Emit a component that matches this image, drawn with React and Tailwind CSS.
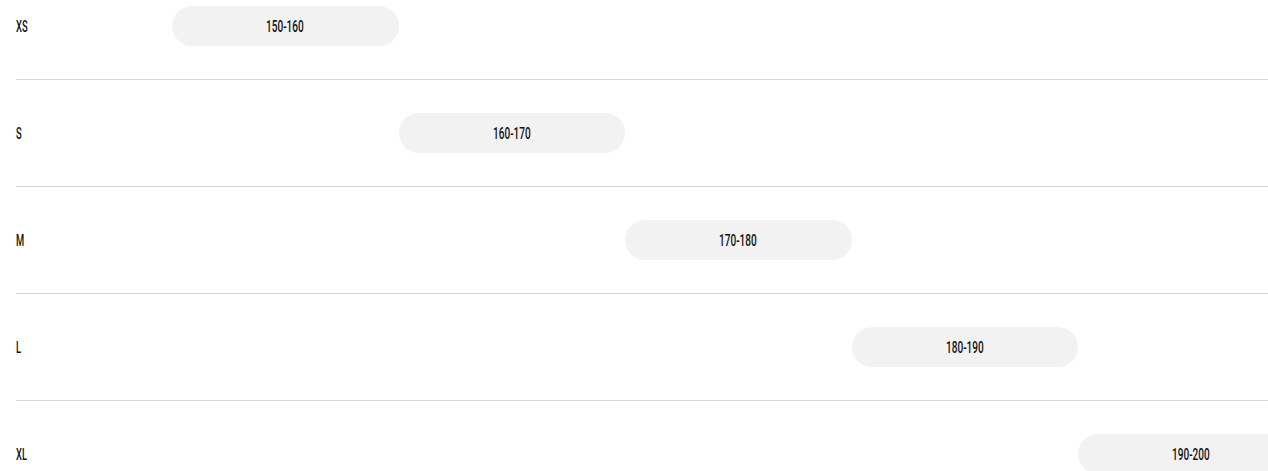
const sizes = [
  { label: "XS", range: "150-160", col: "col-start-2" },
  { label: "S", range: "160-170", col: "col-start-3" },
  { label: "M", range: "170-180", col: "col-start-4" },
  { label: "L", range: "180-190", col: "col-start-5" },
  { label: "XL", range: "190-200", col: "col-start-6" },
];

export default function App() {
  return (
    <div className="w-[1268px] h-[471px] overflow-hidden bg-white pl-4 font-['Roboto','Liberation_Sans',sans-serif] text-[#111]">
      <div className="w-[1288px]">
        {sizes.map((s, i) => (
          <div key={s.label}>
            {i > 0 && <div className="h-px bg-[#d6d6d6]" />}
            <div
              className={
                "grid grid-cols-[156px_226.5px_226.5px_226.5px_226.5px_226.5px] pb-[33px] " +
                (i === 0 ? "pt-[6px]" : "pt-[33px]")
              }
            >
              <div className="col-start-1 row-start-1 flex h-10 items-center">
                <span className="inline-block origin-left scale-x-[0.55] text-[17px] font-medium leading-none">
                  {s.label}
                </span>
              </div>
              <div
                className={
                  s.col +
                  " row-start-1 flex h-10 items-center justify-center rounded-full bg-[#f2f2f2]"
                }
              >
                <span className="inline-block scale-x-[0.59] text-[17px] font-medium leading-none">
                  {s.range}
                </span>
              </div>
            </div>
          </div>
        ))}
      </div>
    </div>
  );
}
